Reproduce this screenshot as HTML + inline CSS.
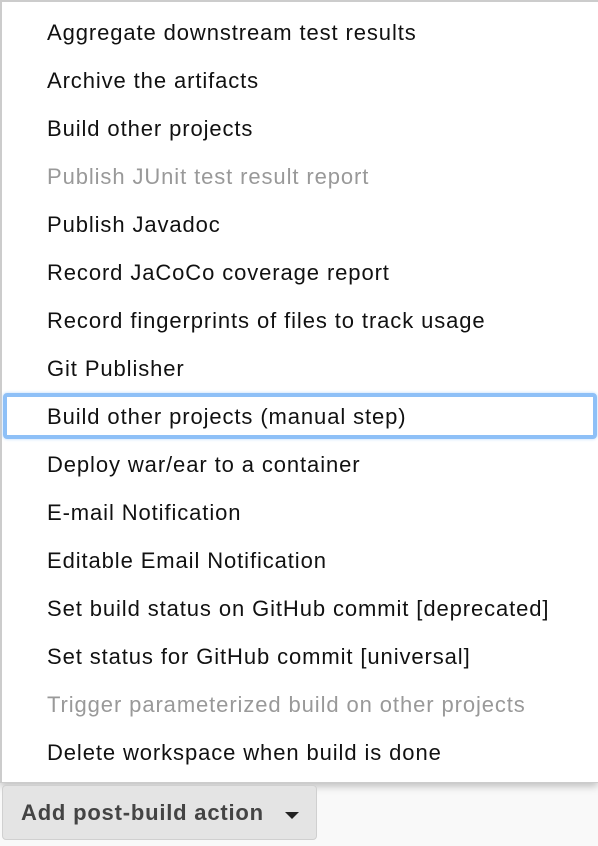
<!DOCTYPE html>
<html><head><style>
body{margin:0;width:598px;height:846px;background:#f9f9f9;position:relative;overflow:hidden;font-family:"Liberation Sans",Arial,sans-serif}
.menu{position:absolute;left:0;top:0;width:596px;height:780px;background:#fff;border:2px solid #ccc;border-right:none;border-bottom:1px solid #ccc;box-shadow:0 3px 8px rgba(0,0,0,.25)}
.it{position:absolute;left:47px;font-size:22px;letter-spacing:0.9px;color:#111;line-height:24px;white-space:nowrap}
.d{color:#999}
.hl{position:absolute;left:3px;top:393px;width:586px;height:38px;border:4px solid #8ec0f7;border-radius:4px;box-shadow:0 0 3px #b8d8fb}
.btn{position:absolute;left:2px;top:785px;width:315px;height:55px;background:#e4e4e4;border:1px solid #d0d0d0;border-radius:4px;box-sizing:border-box}
.btn span{position:absolute;left:18px;top:14px;font-size:22px;letter-spacing:0.8px;font-weight:bold;color:#444}
.tri{position:absolute;left:282px;top:26px;width:0;height:0;border-left:7px solid transparent;border-right:7px solid transparent;border-top:7px solid #222}
</style></head><body>
<div class="menu"></div>
<div class="hl"></div>
<div class="it" style="top:21px">Aggregate downstream test results</div>
<div class="it" style="top:69px">Archive the artifacts</div>
<div class="it" style="top:117px">Build other projects</div>
<div class="it d" style="top:165px">Publish JUnit test result report</div>
<div class="it" style="top:213px">Publish Javadoc</div>
<div class="it" style="top:261px">Record JaCoCo coverage report</div>
<div class="it" style="top:309px">Record fingerprints of files to track usage</div>
<div class="it" style="top:357px">Git Publisher</div>
<div class="it" style="top:405px">Build other projects (manual step)</div>
<div class="it" style="top:453px">Deploy war/ear to a container</div>
<div class="it" style="top:501px">E-mail Notification</div>
<div class="it" style="top:549px">Editable Email Notification</div>
<div class="it" style="top:597px">Set build status on GitHub commit [deprecated]</div>
<div class="it" style="top:645px">Set status for GitHub commit [universal]</div>
<div class="it d" style="top:693px">Trigger parameterized build on other projects</div>
<div class="it" style="top:741px">Delete workspace when build is done</div>
<div class="btn"><span>Add post-build action</span><div class="tri"></div></div>
</body></html>
